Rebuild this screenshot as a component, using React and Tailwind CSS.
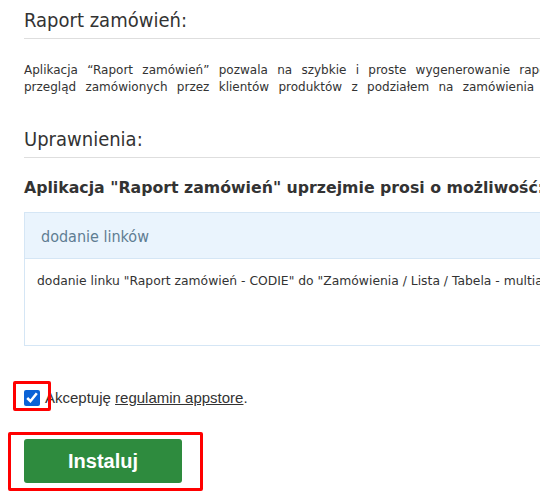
import { useState } from 'react';

const condensed = { fontFamily: '"DejaVu Sans Condensed", "DejaVu Sans", sans-serif' };
const wide = { fontFamily: '"DejaVu Sans", Verdana, sans-serif' };
const arial = { fontFamily: '"Liberation Sans", Arial, sans-serif' };

const Section = ({ title, children }) => (
  <div>
    <h2
      className="pt-[9px] pb-[6px] text-[20px] leading-[23px] text-[#333] border-b border-[#dedede]"
      style={condensed}
    >
      {title}
    </h2>
    {children}
  </div>
);

const App = () => {
  const [accepted, setAccepted] = useState(true);

  return (
    <div className="w-[540px] h-[496px] overflow-hidden bg-white text-[#333]" style={wide}>
      <div className="w-[900px] pl-6">
        <Section title="Raport zamówień:">
          <p className="mt-[23px] text-[12px] leading-[17px] whitespace-nowrap [word-spacing:5.5px]">
            Aplikacja “Raport zamówień” pozwala na szybkie i proste wygenerowanie raportu, który umożliwia
            <br />
            przegląd zamówionych przez klientów produktów z podziałem na zamówienia i produkty.
          </p>
        </Section>

        <div className="mt-[23px]">
          <Section title="Uprawnienia:">
            <h3 className="mt-[20px] text-[15.75px] leading-[20px] font-bold text-[#333] whitespace-nowrap">
              Aplikacja "Raport zamówień" uprzejmie prosi o możliwość:
            </h3>

            <div className="mt-[14px] border border-[#d5e6f5]">
              <div
                className="h-[46px] flex items-center px-4 pt-[3px] bg-[#eaf4fd] border-b border-[#d5e6f5] text-[16px] text-[#5f7d93]"
                style={condensed}
              >
                dodanie linków
              </div>
              <div className="h-[86px] px-3 pt-[14px] text-[12.35px] leading-[17px] whitespace-nowrap">
                dodanie linku "Raport zamówień - CODIE" do "Zamówienia / Lista / Tabela - multiakcje"
              </div>
            </div>
          </Section>
        </div>

        <div className="relative mt-[42px] flex items-center h-[20px]">
          <input
            type="checkbox"
            checked={accepted}
            onChange={() => setAccepted(!accepted)}
            className="w-4 h-4 m-0 accent-[#0b62d6]"
          />
          <span className="ml-[5px] text-[15px] text-[#333]" style={arial}>
            Akceptuję <a className="underline">regulamin appstore</a>.
          </span>
          <div className="absolute left-[-11px] top-[-7px] w-[38px] h-[30px] border-[3px] border-[#ff0000] rounded-[2px]" />
        </div>

        <div className="relative mt-[31px] w-[158px]">
          <button
            className="w-[158px] h-[44px] rounded-[3px] bg-[#2e8b3e] text-white text-[20px] font-bold"
            style={arial}
          >
            Instaluj
          </button>
          <div className="absolute left-[-16px] top-[-7px] w-[195px] h-[59px] border-[3px] border-[#ff0000] rounded-[2px]" />
        </div>
      </div>
    </div>
  );
};

export default App;
